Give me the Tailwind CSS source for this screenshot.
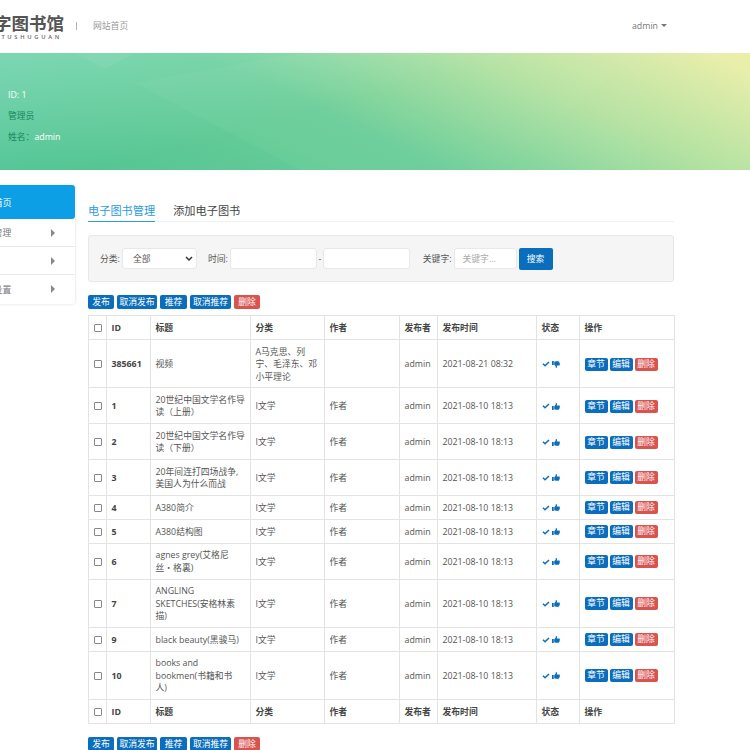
<!DOCTYPE html>
<html lang="zh">
<head>
<meta charset="utf-8">
<title>电子图书管理</title>
<script src="https://cdn.jsdelivr.net/npm/@tailwindcss/browser@4"></script>
</head>
<body>
<svg width="0" height="0" class="absolute">
  <defs>
    <symbol id="chk" viewBox="0 0 16 12"><path d="M1 6.500l2-2 3 3L13 .8l2 2L6 11.600z" fill="#0a6ebd"/></symbol>
    <symbol id="up" viewBox="0 0 16 14"><path d="M0 6h3.500v8H0zM4.500 6.500 7.500 3V.5C7.500 0 9.800-.300 10 2c.1 1.200-.5 2.500-.7 3H14.500c1.600 0 1.600 2 .8 2.500.7.800.5 1.800-.3 2.200.4.900 0 1.700-.7 2 .2 1-.4 1.800-1.500 1.800H8c-1.500 0-2.500-.7-3.500-.8z" fill="#0a6ebd"/></symbol>
    <symbol id="down" viewBox="0 0 16 14"><path d="M0 0h3.500v8H0zM4.500 7.500 7.500 11v2.500c0 .5 2.300.8 2.500-1.500.1-1.200-.5-2.500-.7-3H14.500c1.600 0 1.600-2 .8-2.500.7-.8.5-1.800-.3-2.200.4-.9 0-1.700-.7-2 .2-1-.4-1.800-1.500-1.800H8C6.500.5 5.500 1.200 4.500 1.300z" fill="#0a6ebd"/></symbol>
  </defs>
</svg>
<div class="w-[750px] h-[750px] overflow-hidden bg-white text-[8.800px] leading-[12px] text-[#555] [font-family:'Open_Sans','Noto_Sans_CJK_SC',sans-serif]">

  <header class="h-[53px] pb-[2px] flex items-center relative">
    <div class="w-[64px] shrink-0 overflow-hidden flex justify-end">
      <div class="shrink-0 flex flex-col items-end pt-[2px]">
        <div class="text-[17.500px] leading-[20px] font-bold text-[#555] whitespace-nowrap [font-family:'Noto_Sans_CJK_SC',sans-serif]">数字图书馆</div>
        <div class="mt-[1px] pr-[2px] text-[5.800px] leading-[7px] tracking-[2.700px] font-semibold text-[#666] whitespace-nowrap">TUSHUGUAN</div>
      </div>
    </div>
    <div class="ml-[12px] w-px h-[8px] bg-[#a9b4c0]"></div>
    <a class="ml-[16px] text-[#999]">网站首页</a>
    <div class="ml-auto mr-[83px] flex items-center gap-[3px] text-[#777]">admin<span class="w-0 h-0 border-x-[3px] border-x-transparent border-t-[3px] border-t-[#777]"></span></div>
  </header>

  <section class="h-[117px] relative overflow-hidden bg-[linear-gradient(25deg,#4fc392_0%,#6bce98_45%,#b4e2a2_72%,#e9eeab_96%)]">
    <div class="absolute inset-0 bg-[linear-gradient(165deg,rgba(170,235,225,0.4),rgba(170,235,225,0)_45%)]"></div>
    <svg class="absolute inset-0" width="750" height="117" viewBox="0 0 750 117">
      <polygon points="75,0 105,16 135,0" fill="#fff" opacity=".06"/>
      <polygon points="135,30 300,0 640,0 500,117 300,117" fill="#fff" opacity=".04"/>
      <polygon points="640,0 640,117 500,117" fill="#fff" opacity=".03"/>
    </svg>
    <div class="relative pl-[8px] pt-[36px] flex flex-col gap-[9px]">
      <p class="text-white">ID: 1</p>
      <p class="text-[#17865f]">管理员</p>
      <p class="text-[#17865f]">姓名：<span class="text-white">admin</span></p>
    </div>
  </section>

  <div class="flex items-start">
    <aside class="w-[135px] ml-[-60px] mt-[15px] shrink-0 shadow-[0_0_3px_rgba(0,0,0,0.15)] rounded-[2px] bg-white text-[#777]">
      <div class="h-[34px] pt-[1px] bg-[#0d9fe6] text-white rounded-[3px] flex items-center pl-[54px]">首页</div>
      <div class="h-[28px] pt-[1px] border-b border-[#e8e8e8] flex items-center pl-[36px] relative">图书管理<span class="absolute left-[111px] top-[10px] w-0 h-0 border-y-[4px] border-y-transparent border-l-[4px] border-l-[#888]"></span></div>
      <div class="h-[28px] border-b border-[#e8e8e8] flex items-center pl-[36px] relative"><span class="absolute left-[111px] top-[10px] w-0 h-0 border-y-[4px] border-y-transparent border-l-[4px] border-l-[#888]"></span></div>
      <div class="h-[29px] pt-[1px] flex items-center pl-[36px] relative">系统设置<span class="absolute left-[111px] top-[10px] w-0 h-0 border-y-[4px] border-y-transparent border-l-[4px] border-l-[#888]"></span></div>
    </aside>

    <main class="w-[586px] ml-[13px] shrink-0 pt-[30px]">
      <div class="flex gap-[18px] border-b border-[#eef1f5] h-[22px] text-[11.200px] leading-[21px]">
        <span class="text-[#2b9be0] border-b-[1.500px] border-[#2b9be0] h-[22px]">电子图书管理</span>
        <span class="text-[#444]">添加电子图书</span>
      </div>

      <form class="mt-[13px] h-[47px] bg-[#f5f5f5] border border-[#e8e8e8] rounded-[3px] flex items-center pl-[11px] text-[#555]">
        <span>分类:</span>
        <div class="ml-[2px] w-[75px] h-[21px] bg-white border border-[#e8e8e8] rounded-[3px] flex items-center pl-[10px] relative">全部
          <svg class="absolute right-[3px] top-[7px]" width="8" height="6" viewBox="0 0 8 6"><path d="M1 1l3 3 3-3" fill="none" stroke="#333" stroke-width="1.500"/></svg>
        </div>
        <span class="ml-[11px]">时间:</span>
        <div class="ml-[2px] w-[87px] h-[21px] bg-white border border-[#e8e8e8] rounded-[3px]"></div>
        <span class="w-[6px] text-center">-</span>
        <div class="w-[87px] h-[21px] bg-white border border-[#e8e8e8] rounded-[3px]"></div>
        <span class="ml-[13px]">关键字:</span>
        <div class="ml-[2px] w-[63px] h-[21px] bg-white border border-[#e8e8e8] rounded-[3px] flex items-center pl-[8px] text-[#aaa]">关键字...</div>
        <button type="button" class="ml-[2px] w-[34px] h-[22px] bg-[#0a6ebd] text-white rounded-[2px]">搜索</button>
      </form>

      <div class="mt-[13px] h-[14px] flex gap-[3px] text-white leading-[14px] text-center">
        <span class="w-[26px] bg-[#0a6ebd] rounded-[2px]">发布</span>
        <span class="w-[40px] bg-[#0a6ebd] rounded-[2px]">取消发布</span>
        <span class="w-[27px] bg-[#0a6ebd] rounded-[2px]">推荐</span>
        <span class="w-[41px] bg-[#0a6ebd] rounded-[2px]">取消推荐</span>
        <span class="w-[26px] bg-[#d9534f] rounded-[2px]">删除</span>
      </div>

      <table class="mt-[6px] w-[586px] table-fixed border-collapse leading-[12.400px] [&_td]:border [&_td]:border-[#e3e3e3] [&_td]:px-[4.500px] [&_td]:pt-[5.500px] [&_td]:pb-[4.500px] [&_th]:border [&_th]:border-[#e3e3e3] [&_th]:px-[4.500px] [&_th]:pt-[5.900px] [&_th]:pb-[4.900px] [&_th]:text-left [&_th]:font-bold [&_th]:text-[#444]">
        <colgroup>
          <col class="w-[18px]"><col class="w-[44px]"><col class="w-[100px]"><col class="w-[74px]"><col class="w-[75px]"><col class="w-[38px]"><col class="w-[99px]"><col class="w-[43px]"><col class="w-[95px]">
        </colgroup>
        <thead>
          <tr><th><span class="block w-[8px] h-[8px] border border-[#888] rounded-[1px]"></span></th><th>ID</th><th>标题</th><th>分类</th><th>作者</th><th>发布者</th><th>发布时间</th><th>状态</th><th>操作</th></tr>
        </thead>
        <tbody>
          <tr><td><span class="block w-[8px] h-[8px] border border-[#888] rounded-[1px]"></span></td><td class="font-bold text-[#444]">385661</td><td>视频</td><td>A马克思、列宁、毛泽东、邓小平理论</td><td></td><td>admin</td><td>2021-08-21 08:32</td><td><span class="flex items-center gap-[2px]"><svg width="8" height="6"><use href="#chk"/></svg><svg width="8" height="7"><use href="#down"/></svg></span></td><td><span class="flex gap-[2px] text-white leading-[13px] text-center"><span class="w-[23px] bg-[#0a6ebd] rounded-[2px]">章节</span><span class="w-[23px] bg-[#0a6ebd] rounded-[2px]">编辑</span><span class="w-[23px] bg-[#d9534f] rounded-[2px]">删除</span></span></td></tr>
          <tr><td><span class="block w-[8px] h-[8px] border border-[#888] rounded-[1px]"></span></td><td class="font-bold text-[#444]">1</td><td>20世纪中国文学名作导读（上册）</td><td>I文学</td><td>作者</td><td>admin</td><td>2021-08-10 18:13</td><td><span class="flex items-center gap-[2px]"><svg width="8" height="6"><use href="#chk"/></svg><svg width="8" height="7"><use href="#up"/></svg></span></td><td><span class="flex gap-[2px] text-white leading-[13px] text-center"><span class="w-[23px] bg-[#0a6ebd] rounded-[2px]">章节</span><span class="w-[23px] bg-[#0a6ebd] rounded-[2px]">编辑</span><span class="w-[23px] bg-[#d9534f] rounded-[2px]">删除</span></span></td></tr>
          <tr><td><span class="block w-[8px] h-[8px] border border-[#888] rounded-[1px]"></span></td><td class="font-bold text-[#444]">2</td><td>20世纪中国文学名作导读（下册）</td><td>I文学</td><td>作者</td><td>admin</td><td>2021-08-10 18:13</td><td><span class="flex items-center gap-[2px]"><svg width="8" height="6"><use href="#chk"/></svg><svg width="8" height="7"><use href="#up"/></svg></span></td><td><span class="flex gap-[2px] text-white leading-[13px] text-center"><span class="w-[23px] bg-[#0a6ebd] rounded-[2px]">章节</span><span class="w-[23px] bg-[#0a6ebd] rounded-[2px]">编辑</span><span class="w-[23px] bg-[#d9534f] rounded-[2px]">删除</span></span></td></tr>
          <tr><td><span class="block w-[8px] h-[8px] border border-[#888] rounded-[1px]"></span></td><td class="font-bold text-[#444]">3</td><td>20年间连打四场战争,美国人为什么而战</td><td>I文学</td><td>作者</td><td>admin</td><td>2021-08-10 18:13</td><td><span class="flex items-center gap-[2px]"><svg width="8" height="6"><use href="#chk"/></svg><svg width="8" height="7"><use href="#up"/></svg></span></td><td><span class="flex gap-[2px] text-white leading-[13px] text-center"><span class="w-[23px] bg-[#0a6ebd] rounded-[2px]">章节</span><span class="w-[23px] bg-[#0a6ebd] rounded-[2px]">编辑</span><span class="w-[23px] bg-[#d9534f] rounded-[2px]">删除</span></span></td></tr>
          <tr><td><span class="block w-[8px] h-[8px] border border-[#888] rounded-[1px]"></span></td><td class="font-bold text-[#444]">4</td><td>A380简介</td><td>I文学</td><td>作者</td><td>admin</td><td>2021-08-10 18:13</td><td><span class="flex items-center gap-[2px]"><svg width="8" height="6"><use href="#chk"/></svg><svg width="8" height="7"><use href="#up"/></svg></span></td><td><span class="flex gap-[2px] text-white leading-[13px] text-center"><span class="w-[23px] bg-[#0a6ebd] rounded-[2px]">章节</span><span class="w-[23px] bg-[#0a6ebd] rounded-[2px]">编辑</span><span class="w-[23px] bg-[#d9534f] rounded-[2px]">删除</span></span></td></tr>
          <tr><td><span class="block w-[8px] h-[8px] border border-[#888] rounded-[1px]"></span></td><td class="font-bold text-[#444]">5</td><td>A380结构图</td><td>I文学</td><td>作者</td><td>admin</td><td>2021-08-10 18:13</td><td><span class="flex items-center gap-[2px]"><svg width="8" height="6"><use href="#chk"/></svg><svg width="8" height="7"><use href="#up"/></svg></span></td><td><span class="flex gap-[2px] text-white leading-[13px] text-center"><span class="w-[23px] bg-[#0a6ebd] rounded-[2px]">章节</span><span class="w-[23px] bg-[#0a6ebd] rounded-[2px]">编辑</span><span class="w-[23px] bg-[#d9534f] rounded-[2px]">删除</span></span></td></tr>
          <tr><td><span class="block w-[8px] h-[8px] border border-[#888] rounded-[1px]"></span></td><td class="font-bold text-[#444]">6</td><td>agnes grey(艾格尼丝・格裏)</td><td>I文学</td><td>作者</td><td>admin</td><td>2021-08-10 18:13</td><td><span class="flex items-center gap-[2px]"><svg width="8" height="6"><use href="#chk"/></svg><svg width="8" height="7"><use href="#up"/></svg></span></td><td><span class="flex gap-[2px] text-white leading-[13px] text-center"><span class="w-[23px] bg-[#0a6ebd] rounded-[2px]">章节</span><span class="w-[23px] bg-[#0a6ebd] rounded-[2px]">编辑</span><span class="w-[23px] bg-[#d9534f] rounded-[2px]">删除</span></span></td></tr>
          <tr><td><span class="block w-[8px] h-[8px] border border-[#888] rounded-[1px]"></span></td><td class="font-bold text-[#444]">7</td><td>ANGLING SKETCHES(安格林素<br>描)</td><td>I文学</td><td>作者</td><td>admin</td><td>2021-08-10 18:13</td><td><span class="flex items-center gap-[2px]"><svg width="8" height="6"><use href="#chk"/></svg><svg width="8" height="7"><use href="#up"/></svg></span></td><td><span class="flex gap-[2px] text-white leading-[13px] text-center"><span class="w-[23px] bg-[#0a6ebd] rounded-[2px]">章节</span><span class="w-[23px] bg-[#0a6ebd] rounded-[2px]">编辑</span><span class="w-[23px] bg-[#d9534f] rounded-[2px]">删除</span></span></td></tr>
          <tr><td><span class="block w-[8px] h-[8px] border border-[#888] rounded-[1px]"></span></td><td class="font-bold text-[#444]">9</td><td>black beauty(黑骏马)</td><td>I文学</td><td>作者</td><td>admin</td><td>2021-08-10 18:13</td><td><span class="flex items-center gap-[2px]"><svg width="8" height="6"><use href="#chk"/></svg><svg width="8" height="7"><use href="#up"/></svg></span></td><td><span class="flex gap-[2px] text-white leading-[13px] text-center"><span class="w-[23px] bg-[#0a6ebd] rounded-[2px]">章节</span><span class="w-[23px] bg-[#0a6ebd] rounded-[2px]">编辑</span><span class="w-[23px] bg-[#d9534f] rounded-[2px]">删除</span></span></td></tr>
          <tr><td><span class="block w-[8px] h-[8px] border border-[#888] rounded-[1px]"></span></td><td class="font-bold text-[#444]">10</td><td>books and bookmen(书籍和书<br>人)</td><td>I文学</td><td>作者</td><td>admin</td><td>2021-08-10 18:13</td><td><span class="flex items-center gap-[2px]"><svg width="8" height="6"><use href="#chk"/></svg><svg width="8" height="7"><use href="#up"/></svg></span></td><td><span class="flex gap-[2px] text-white leading-[13px] text-center"><span class="w-[23px] bg-[#0a6ebd] rounded-[2px]">章节</span><span class="w-[23px] bg-[#0a6ebd] rounded-[2px]">编辑</span><span class="w-[23px] bg-[#d9534f] rounded-[2px]">删除</span></span></td></tr>
        </tbody>
        <tfoot>
          <tr><th><span class="block w-[8px] h-[8px] border border-[#888] rounded-[1px]"></span></th><th>ID</th><th>标题</th><th>分类</th><th>作者</th><th>发布者</th><th>发布时间</th><th>状态</th><th>操作</th></tr>
        </tfoot>
      </table>

      <div class="mt-[13px] h-[14px] flex gap-[3px] text-white leading-[14px] text-center">
        <span class="w-[26px] bg-[#0a6ebd] rounded-[2px]">发布</span>
        <span class="w-[40px] bg-[#0a6ebd] rounded-[2px]">取消发布</span>
        <span class="w-[27px] bg-[#0a6ebd] rounded-[2px]">推荐</span>
        <span class="w-[41px] bg-[#0a6ebd] rounded-[2px]">取消推荐</span>
        <span class="w-[26px] bg-[#d9534f] rounded-[2px]">删除</span>
      </div>
    </main>
  </div>
</div>
</body>
</html>
